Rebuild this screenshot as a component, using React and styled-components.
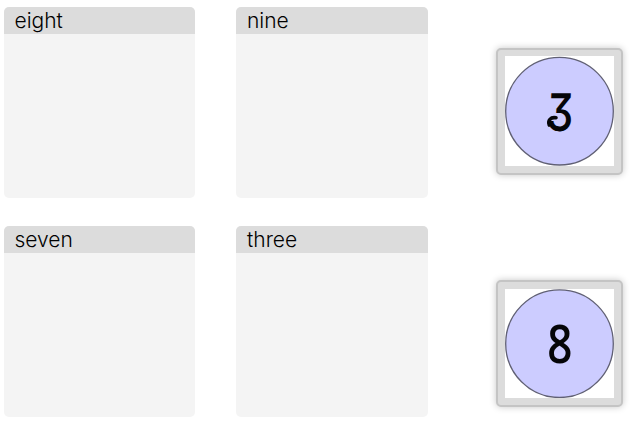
import React from "react";
import styled, { createGlobalStyle } from "styled-components";

const GlobalStyle = createGlobalStyle`
  body { margin: 0; background: #fff; overflow: hidden; }
  * { box-sizing: border-box; }
`;

const Board = styled.main`
  display: flex;
  align-items: flex-start;
  width: 632px;
  height: 426px;
  padding: 7px 0 0 4px;
  font-family: Inter, "Liberation Sans", sans-serif;
`;

const Targets = styled.section`
  display: grid;
  grid-template-columns: 191px 192px;
  column-gap: 41px;
  row-gap: 28px;
`;

const DropZone = styled.div`
  height: 191px;
  border-radius: 5px;
  overflow: hidden;
  background: #f4f4f4;
`;

const ZoneTitle = styled.div`
  height: 27px;
  padding-left: ${(p) => p.$inset}px;
  background: #dcdcdc;
  color: #000;
  font-size: 21px;
  font-weight: 340;
  line-height: 27px;
`;

const Choices = styled.aside`
  display: flex;
  flex-direction: column;
  gap: 105px;
  margin: 41px 0 0 68px;
`;

const Tile = styled.div`
  width: 127px;
  height: 127px;
  padding: ${(p) => p.$top}px 7px 7px 7px;
  border: 2px solid #c4c4c4;
  border-radius: 5px;
  background: #dcdcdc;
  box-shadow: 0 0 7px rgba(0, 0, 0, 0.22);
`;

const Picture = styled.svg`
  display: block;
  width: 109px;
  height: ${(p) => p.$height}px;
  background: #fff;
`;

const Numeral = styled.text`
  font-family: ${(p) => p.$font};
  font-size: 50px;
  font-weight: ${(p) => p.$weight};
  font-feature-settings: "cv09" 1;
  text-anchor: middle;
  fill: #050508;
`;

const Flourish = styled.path`
  fill: none;
  stroke: #050508;
  stroke-width: 3.6;
  stroke-linecap: round;
`;

const zones = [
  { name: "eight", inset: 10.5 },
  { name: "nine", inset: 11 },
  { name: "seven", inset: 10.5 },
  { name: "three", inset: 11 },
];

export default function App() {
  return (
    <>
      <GlobalStyle />
      <Board>
        <Targets>
          {zones.map((zone) => (
            <DropZone key={zone.name}>
              <ZoneTitle $inset={zone.inset}>{zone.name}</ZoneTitle>
            </DropZone>
          ))}
        </Targets>
        <Choices>
          <Tile $top={6}>
            <Picture $height={110} viewBox="0 0 109 110">
              <circle cx="54.5" cy="55.2" r="53.8" fill="#ccccff" stroke="#606074" strokeWidth="1.3" />
              <Numeral $font="Inter, sans-serif" $weight={450} transform="translate(54.3 74.6) scale(0.86 1.04) skewX(-3)">3</Numeral>
              <Flourish d="M44.3 69C42.6 64.5 45.5 60.8 51 61.8" />
            </Picture>
          </Tile>
          <Tile $top={7}>
            <Picture $height={109} viewBox="0 0 109 109">
              <circle cx="54.5" cy="54.7" r="53.8" fill="#ccccff" stroke="#606074" strokeWidth="1.3" />
              <Numeral $font='"Open Sans", sans-serif' $weight={540} transform="translate(54.8 73.8) scale(0.88 1.05)">8</Numeral>
            </Picture>
          </Tile>
        </Choices>
      </Board>
    </>
  );
}
